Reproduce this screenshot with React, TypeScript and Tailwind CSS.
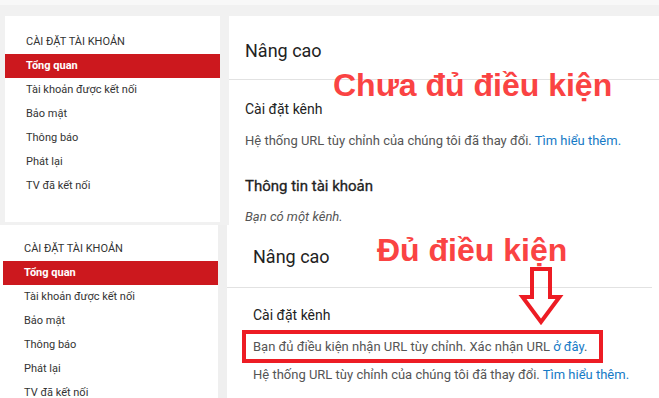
const SIDEBAR_ITEMS = ["Tài khoản được kết nối", "Bảo mật", "Thông báo", "Phát lại", "TV đã kết nối"];

const LINK = "text-[#167ac6]";

// ── Sidebar ───────────────────────────────────────────────────────────────────

function Sidebar({ top }: { top: string }) {
  return (
    <div className={`w-[215px] shrink-0 bg-white ${top}`}>
      <p className="pl-[21px] mb-[4px] text-[11px] leading-[16px] text-[#333]">CÀI ĐẶT TÀI KHOẢN</p>
      <div className="h-[24px] bg-[#cc181e] pl-[21px] flex items-center text-[11px] font-bold text-white">
        Tổng quan
      </div>
      {SIDEBAR_ITEMS.map((label) => (
        <div key={label} className="h-[24px] pl-[21px] flex items-center text-[11px] text-[#333]">
          {label}
        </div>
      ))}
    </div>
  );
}

// ── Annotations ───────────────────────────────────────────────────────────────

function Note({ text, className }: { text: string; className: string }) {
  return (
    <span
      className={`absolute whitespace-nowrap text-[32px] leading-[36px] font-bold text-[#fa4343] ${className}`}
      style={{ fontFamily: '"Liberation Sans", Arial, sans-serif' }}
    >
      {text}
    </span>
  );
}

function DownArrow() {
  return (
    <svg className="absolute left-[291px] top-[40px]" width="46" height="64" viewBox="0 0 46 64">
      <path
        d="M14 4 H32 V32 H41.5 L23 57 L4.5 32 H14 Z"
        fill="none"
        stroke="#ed1c24"
        strokeWidth="4"
        strokeLinejoin="miter"
      />
    </svg>
  );
}

// ── Page ──────────────────────────────────────────────────────────────────────

export default function App() {
  return (
    <div
      className="w-[659px] h-[398px] overflow-hidden bg-white"
      style={{ fontFamily: "Roboto, Arial, sans-serif" }}
    >
      {/* Screenshot 1: not eligible */}
      <div className="h-[225px] bg-[#f1f1f1] border-t-[5px] border-[#f8f8f8]">
        <div className="flex pt-[11px] pl-[5px] gap-[9px]">
          <Sidebar top="h-[206px] pt-[18px]" />
          <div className="relative flex-1 h-[209px] bg-white">
            <div className="h-[64px] border-b border-[#e2e2e2] pl-4 pt-[24px] text-[18px] leading-[22px] text-[#222]">
              Nâng cao
            </div>
            <div className="pl-4">
              <p className="mt-[20px] text-[14px] leading-[18px] text-[#222]">Cài đặt kênh</p>
              <p className="mt-[14px] text-[13px] leading-[18px] text-[#555]">
                Hệ thống URL tùy chỉnh của chúng tôi đã thay đổi. <span className={LINK}>Tìm hiểu thêm.</span>
              </p>
              <p className="mt-[27px] text-[15px] leading-[18px] text-[#222] [-webkit-text-stroke:0.3px_#222]">Thông tin tài khoản</p>
              <p className="mt-[13px] text-[13px] leading-[18px] italic text-[#555]">Bạn có một kênh.</p>
            </div>
            <Note text="Chưa đủ điều kiện" className="left-[104px] top-[51px]" />
          </div>
        </div>
      </div>

      {/* Screenshot 2: eligible */}
      <div className="flex h-[173px]">
        <div className="pl-[3px] shrink-0">
          <Sidebar top="h-[173px] pt-[16px]" />
        </div>
        <div className="w-[9px] shrink-0 bg-[#efefef]" />
        <div className="relative flex-1 bg-white">
          <div className="h-[63px] mr-[7px] border-b border-[#e2e2e2] pl-[26px] pt-[21px] text-[18px] leading-[22px] text-[#222]">
            Nâng cao
          </div>
          <p className="pl-[26px] mt-[18px] text-[14px] leading-[18px] text-[#222]">Cài đặt kênh</p>
          <p className="ml-[15px] mt-[6px] w-[361px] border-4 border-[#ed1c24] pl-[7px] py-[3px] text-[13px] leading-[19px] text-[#555]">
            Bạn đủ điều kiện nhận URL tùy chỉnh. Xác nhận URL <span className={LINK}>ở đây</span>.
          </p>
          <p className="pl-[26px] mt-[3px] text-[13px] leading-[18px] text-[#555]">
            Hệ thống URL tùy chỉnh của chúng tôi đã thay đổi. <span className={LINK}>Tìm hiểu thêm.</span>
          </p>
          <Note text="Đủ điều kiện" className="left-[150px] top-[7px]" />
          <DownArrow />
        </div>
      </div>
    </div>
  );
}
